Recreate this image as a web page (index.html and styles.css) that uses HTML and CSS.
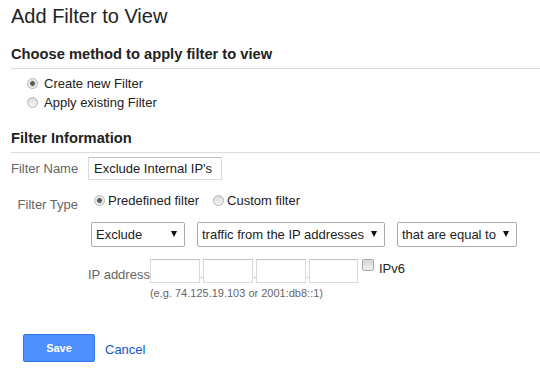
FILE: index.html
```html
<!DOCTYPE html>
<html>
  <head>
    <title>Add Filter to View</title>
    <meta name="viewport" content="width=device-width, initial-scale=1.0" />
    <link rel="stylesheet" href="styles.css">
  </head>
  <body>
    <div class="page">
      <h1 class="page-title">Add Filter to View</h1>

      <h2 class="section-title">Choose method to apply filter to view</h2>
      <div class="method-list">
        <label class="method-option"><input type="radio" name="method" checked /> Create new Filter</label>
        <label class="method-option"><input type="radio" name="method" /> Apply existing Filter</label>
      </div>

      <h2 class="section-title">Filter Information</h2>

      <div class="field-row">
        <span class="field-label">Filter Name</span>
        <input class="text-input" type="text" value="Exclude Internal IP's" />
      </div>

      <div class="field-row type-row">
        <span class="field-label">Filter Type</span>
        <label class="type-option"><input type="radio" name="type" checked /> Predefined filter</label>
        <label class="type-option"><input type="radio" name="type" /> Custom filter</label>
      </div>

      <div class="select-row">
        <div class="select-box select-action">
          <span>Exclude</span>
          <svg class="arrow" width="6" height="6" viewBox="0 0 6 6"><path d="M0 0h6L3 6z" /></svg>
        </div>
        <div class="select-box select-source">
          <span>traffic from the IP addresses</span>
          <svg class="arrow" width="6" height="6" viewBox="0 0 6 6"><path d="M0 0h6L3 6z" /></svg>
        </div>
        <div class="select-box select-match">
          <span>that are equal to</span>
          <svg class="arrow" width="6" height="6" viewBox="0 0 6 6"><path d="M0 0h6L3 6z" /></svg>
        </div>
      </div>

      <div class="ip-row">
        <span class="ip-label">IP address</span>
        <div class="ip-fields">
          <div class="ip-boxes">
            <input class="ip-box" type="text" />
            <span class="ip-dot">.</span>
            <input class="ip-box" type="text" />
            <span class="ip-dot">.</span>
            <input class="ip-box" type="text" />
            <span class="ip-dot">.</span>
            <input class="ip-box" type="text" />
            <label class="ipv6-option"><input type="checkbox" /> IPv6</label>
          </div>
          <div class="ip-hint">(e.g. 74.125.19.103 or 2001:db8::1)</div>
        </div>
      </div>

      <div class="actions">
        <button class="save-button">Save</button>
        <a href="#" class="cancel-link">Cancel</a>
      </div>
    </div>
  </body>
</html>
```

FILE: styles.css
```css
body {
  margin: 0;
  background: #fff;
  color: #222;
  font-family: "Liberation Sans", Arial, sans-serif;
  font-size: 13px;
}
.page {
  padding: 4px 0 0 11px;
}
.page-title {
  margin: 0;
  font-size: 20px;
  font-weight: normal;
  line-height: 24px;
}
.section-title {
  margin: 17px 0 0;
  padding-bottom: 5px;
  border-bottom: 1px solid #dcdcdc;
  font-size: 14.7px;
  line-height: 18px;
}

/* radios */
input[type="radio"] {
  appearance: none;
  width: 11px;
  height: 11px;
  margin: 0;
  border: 1px solid #b4b4b4;
  border-radius: 50%;
  background: linear-gradient(#dcdcdc, #f4f4f4);
}
input[type="radio"]:checked {
  background: radial-gradient(circle, #5a5a5a 0 2px, #d8d8d8 2.6px, #f4f4f4 4.5px);
}
.method-list {
  margin-top: 5px;
  padding-left: 16px;
}
.method-option {
  display: flex;
  align-items: center;
  gap: 6px;
  line-height: 19px;
}

/* form rows */
.field-row {
  display: flex;
  align-items: center;
  margin-top: 4px;
}
.field-label {
  flex-shrink: 0;
  width: 67px;
  margin-right: 10px;
  text-align: right;
  white-space: nowrap;
  color: #666;
}
.text-input {
  box-sizing: border-box;
  width: 134px;
  height: 23px;
  margin: 0;
  padding: 0 5px;
  border: 1px solid #d9d9d9;
  border-top-color: #c0c0c0;
  font: 13px "Liberation Sans", Arial, sans-serif;
  color: #222;
}
.type-row {
  align-items: flex-start;
  margin-top: 11px;
}
.type-row .field-label {
  padding-top: 4px;
  line-height: 19px;
}
.type-option {
  display: flex;
  align-items: center;
  gap: 3px;
  line-height: 19px;
  margin-left: 6px;
}
.type-option + .type-option {
  margin-left: 14px;
}

/* dropdowns */
.select-row {
  display: flex;
  gap: 12px;
  margin: 8px 0 0 80px;
}
.select-box {
  box-sizing: border-box;
  height: 25px;
  display: flex;
  align-items: center;
  justify-content: space-between;
  padding: 0 7px 0 4px;
  border: 1px solid #aaa;
  border-radius: 2px;
  background: #fff;
  white-space: nowrap;
}
.select-action {
  width: 94px;
}
.select-source {
  width: 188px;
}
.select-match {
  width: 120px;
}
.arrow {
  flex-shrink: 0;
  fill: #111;
  margin: 0 0 2px 4px;
}

/* ip address */
.ip-row {
  display: flex;
  margin: 12px 0 0 77px;
}
.ip-label {
  flex-shrink: 0;
  color: #666;
  line-height: 19px;
  padding-top: 6px;
  white-space: nowrap;
}
.ip-boxes {
  display: flex;
  align-items: flex-start;
}
.ip-box {
  box-sizing: border-box;
  width: 50px;
  height: 24px;
  margin: 0;
  border: 1px solid #d9d9d9;
  border-top-color: #c0c0c0;
}
.ip-box:last-of-type {
  width: 49px;
}
.ip-dot {
  width: 3px;
  padding-top: 9px;
  font-size: 11px;
  color: #999;
  text-align: center;
}
.ipv6-option {
  display: flex;
  align-items: flex-start;
  gap: 5px;
  margin-left: 4px;
  line-height: 19px;
  white-space: nowrap;
}
input[type="checkbox"] {
  appearance: none;
  width: 12px;
  height: 12px;
  margin: 0;
  border: 1px solid #a8a8a8;
  border-radius: 2px;
  background: linear-gradient(#d6d6d6, #f2f2f2);
}
.ip-hint {
  margin-top: 3px;
  font-size: 11px;
  line-height: 14px;
  color: #666;
}

/* buttons */
.actions {
  display: flex;
  align-items: center;
  gap: 10px;
  margin: 34px 0 0 12px;
}
.save-button {
  width: 72px;
  height: 28px;
  border: 1px solid #3079ed;
  border-radius: 2px;
  background: #4d90fe;
  color: #fff;
  font: bold 11px "Liberation Sans", Arial, sans-serif;
}
.cancel-link {
  color: #1155cc;
  text-decoration: none;
  padding-top: 2px;
}
```
